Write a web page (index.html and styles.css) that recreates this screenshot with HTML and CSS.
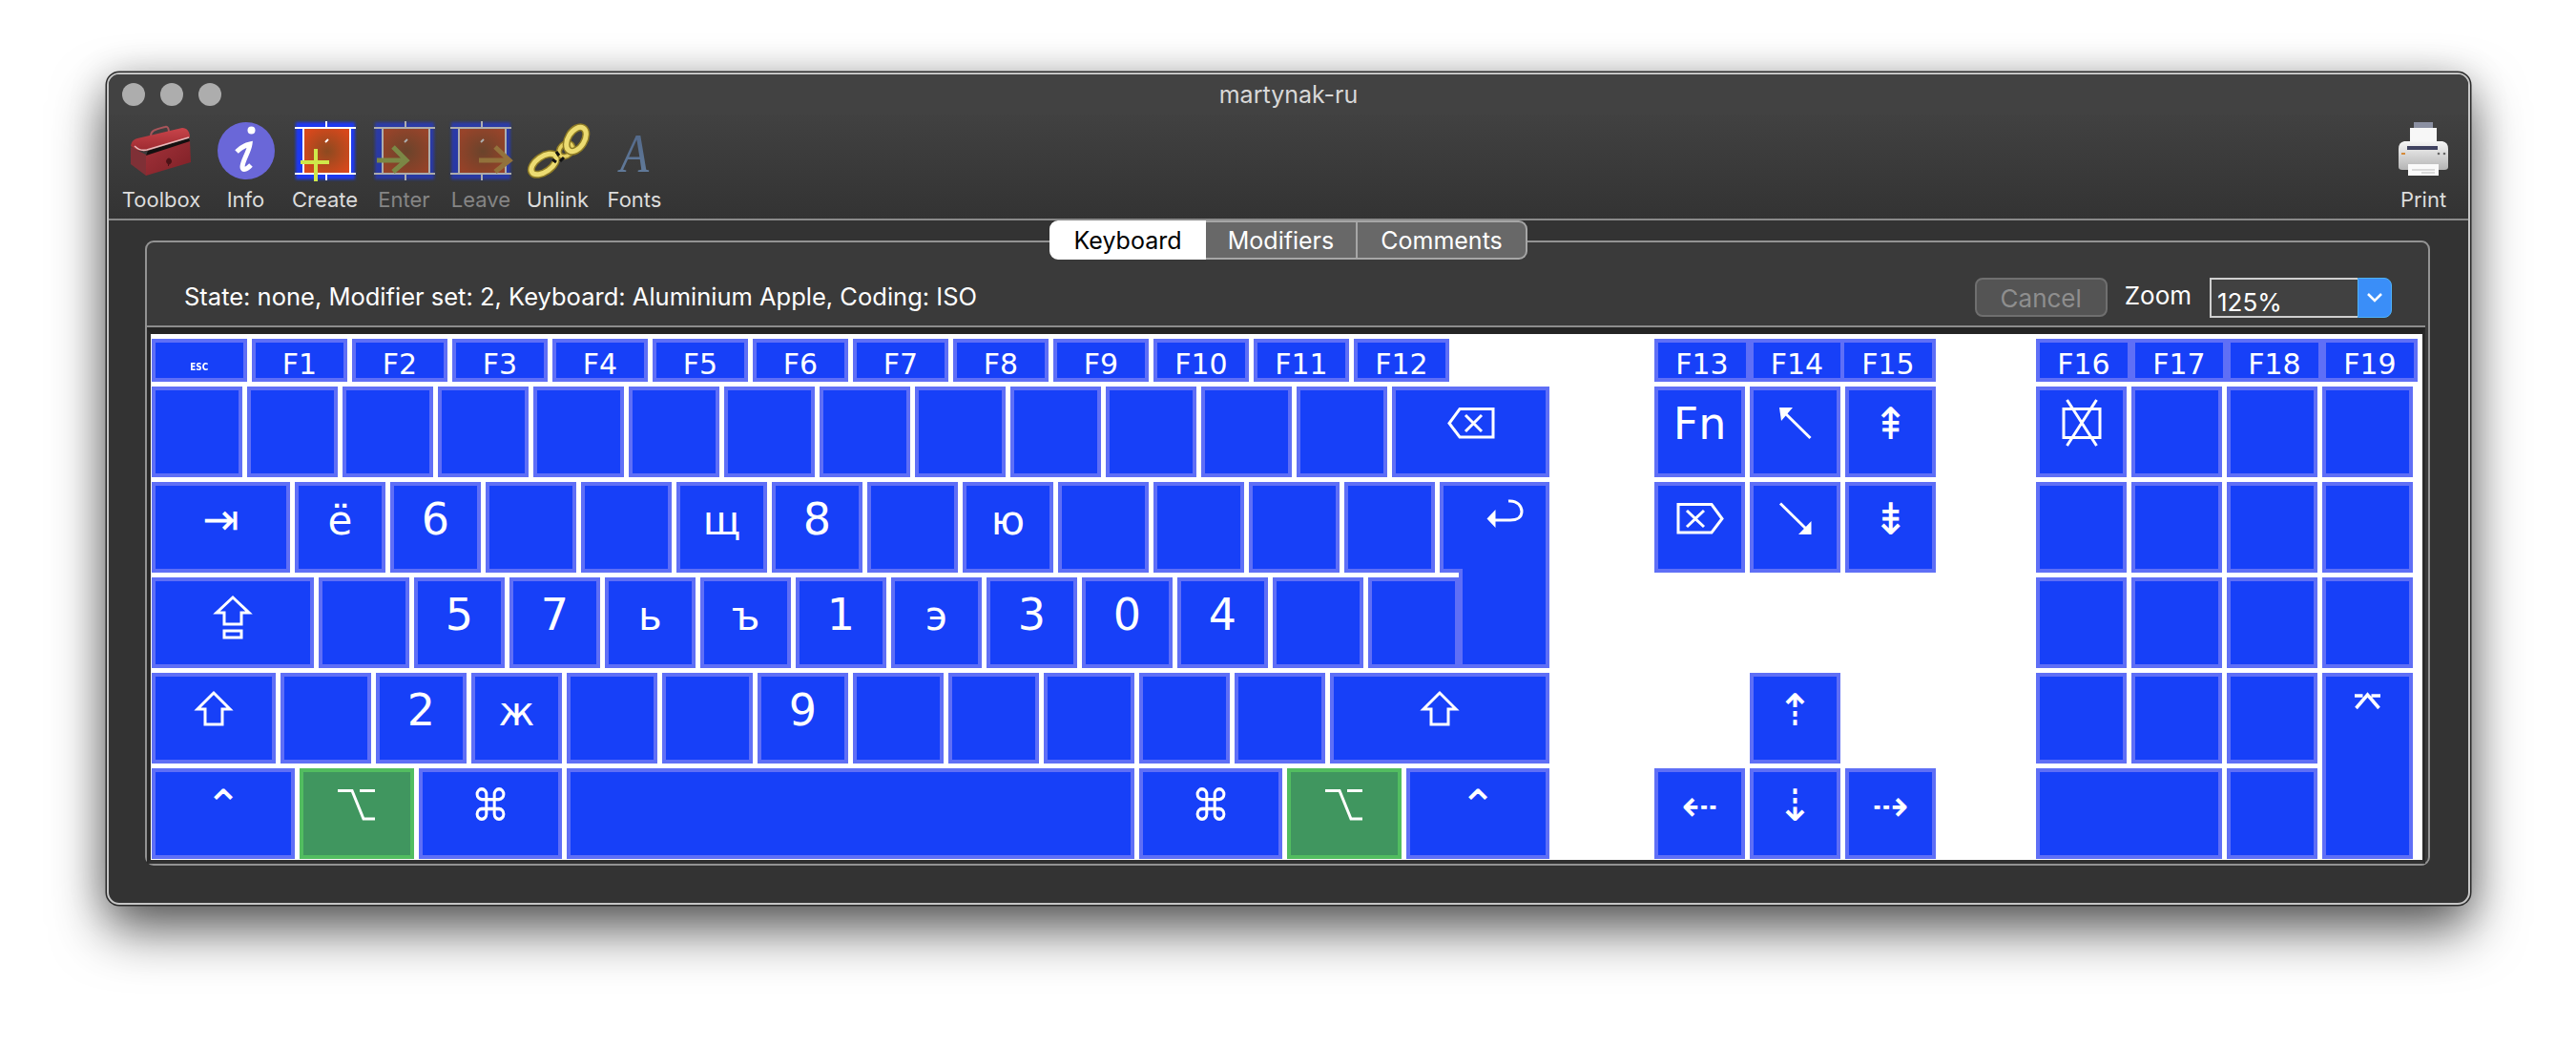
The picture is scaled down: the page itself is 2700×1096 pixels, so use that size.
FILE: index.html
```html
<!DOCTYPE html>
<html lang="en">
<head>
    <meta charset="UTF-8">
    <title>martynak-ru</title>
    <link rel="stylesheet" href="styles.css">
</head>
<body>
    <svg class="defs" width="0" height="0">
        <defs>
            <radialGradient id="cellfill" cx="50%" cy="50%" r="60%">
                <stop offset="0" stop-color="#8c4a20"/>
                <stop offset="1" stop-color="#d8481c"/>
            </radialGradient>
            <linearGradient id="lidfill" x1="0" y1="0" x2="0" y2="1">
                <stop offset="0" stop-color="#c9444a"/>
                <stop offset="1" stop-color="#9c2a30"/>
            </linearGradient>
            <linearGradient id="bodyfill" x1="0" y1="0" x2="1" y2="1">
                <stop offset="0" stop-color="#a3323a"/>
                <stop offset="1" stop-color="#7d2026"/>
            </linearGradient>
            <linearGradient id="printfill" x1="0" y1="0" x2="0" y2="1">
                <stop offset="0" stop-color="#f6f6f6"/>
                <stop offset="1" stop-color="#b4b4b4"/>
            </linearGradient>
            <linearGradient id="afill" x1="0" y1="0" x2="0" y2="1">
                <stop offset="0" stop-color="#4f6485"/>
                <stop offset="1" stop-color="#66809f"/>
            </linearGradient>
            <filter id="soft"><feGaussianBlur stdDeviation="1.4"/></filter>
            <g id="cell">
                <rect x="1" y="2" width="62" height="60" fill="#1c38f2" filter="url(#soft)"/>
                <rect x="10" y="9" width="48" height="47" fill="url(#cellfill)"/>
                <path d="M0 8H64M0 56H64M9 8V56M58 8V56M33 1V8M33 56V63" stroke="#fff" stroke-width="2" fill="none"/>
                <path d="M32 23L35 20" stroke="#fff" stroke-width="2"/>
            </g>
            <path id="k-shift" d="M30 17L13 34H21V50H39V34H47Z" fill="none" stroke="#fff" stroke-width="3"/>
            <path id="k-opt" d="M10 19.500H25L37 49H49M33 19.500H49" fill="none" stroke="#fff" stroke-width="3"/>
        </defs>
    </svg>

    <div class="window">
        <div class="titlebar">
            <div class="lights"><span></span><span></span><span></span></div>
            <div class="title">martynak-ru</div>
        </div>
        <div class="toolbar">
            <div class="tool tool-wide">
                <svg class="ico" viewBox="0 0 64 64">
                    <path d="M21 17C21 11 24 10 36 7C39 6 40 9 40 13" fill="none" stroke="#a8555a" stroke-width="2"/>
                    <path d="M0 28L16 36V58L0 46Z" fill="#7f3036"/>
                    <path d="M16 36L62 21L63 44L16 58Z" fill="url(#bodyfill)"/>
                    <path d="M16 37L62 22L61 19L18 32Z" fill="#141010"/>
                    <path d="M0 27C1 22 3 20 7 19L54 8C59 8 62 12 62 18L17 32C12 33 5 32 0 27Z" fill="url(#lidfill)"/>
                    <path d="M4 27C8 31 13 32 17 31L61 18" fill="none" stroke="#e8b9ba" stroke-width="1.6"/>
                    <path d="M40 40a2.4 3 0 1 0 .1 0M39.5 44v4" fill="#4c1216" stroke="#4c1216"/>
                </svg>
                <span>Toolbox</span>
            </div>
            <div class="tool">
                <svg class="ico" viewBox="0 0 64 64">
                    <circle cx="32" cy="32" r="30" fill="#6a67d8"/>
                    <circle cx="37.500" cy="10.500" r="4" fill="#fff"/>
                    <path d="M22 33C27 28 31 26 36 25C35 33 28 43 28 49C28 53 32 52 37 47" fill="none" stroke="#fff" stroke-width="5"/>
                </svg>
                <span>Info</span>
            </div>
            <div class="tool tool-create">
                <svg class="ico" viewBox="0 0 64 64">
                    <use href="#cell"/>
                    <path d="M6 44H36M22 30V64" stroke="#cfe84a" stroke-width="4"/>
                </svg>
                <span>Create</span>
            </div>
            <div class="tool off">
                <svg class="ico" viewBox="0 0 64 64">
                    <use href="#cell"/>
                    <path d="M3 42H34M20 28L34 42L20 54" fill="none" stroke="#a9c04e" stroke-width="5"/>
                </svg>
                <span>Enter</span>
            </div>
            <div class="tool off">
                <svg class="ico" viewBox="0 0 64 64">
                    <use href="#cell"/>
                    <path d="M30 42H62M47 28L62 42L47 54" fill="none" stroke="#d29a3c" stroke-width="5"/>
                </svg>
                <span>Leave</span>
            </div>
            <div class="tool">
                <svg class="ico" viewBox="0 0 64 64">
                    <g fill="none">
                        <ellipse cx="17" cy="46" rx="15" ry="8" transform="rotate(-35 17 46)" stroke="#8f7c26" stroke-width="8"/>
                        <ellipse cx="17" cy="46" rx="15" ry="8" transform="rotate(-35 17 46)" stroke="#ecdc72" stroke-width="5"/>
                        <ellipse cx="40" cy="31" rx="8" ry="6" transform="rotate(-45 40 31)" stroke="#8f7c26" stroke-width="6.500"/>
                        <ellipse cx="40" cy="31" rx="8" ry="6" transform="rotate(-45 40 31)" stroke="#e6d264" stroke-width="3.500"/>
                        <ellipse cx="51" cy="20" rx="14" ry="8.500" transform="rotate(-58 51 20)" stroke="#8f7c26" stroke-width="8"/>
                        <ellipse cx="51" cy="20" rx="14" ry="8.500" transform="rotate(-58 51 20)" stroke="#ecdc72" stroke-width="5"/>
                        <path d="M30 33L33 37M26 41L30 44M38 39L34 43" stroke="#111" stroke-width="3"/>
                    </g>
                </svg>
                <span>Unlink</span>
            </div>
            <div class="tool">
                <svg class="ico" viewBox="0 0 64 64">
                    <text class="ico-a" transform="translate(32 54) scale(.85 1)">A</text>
                </svg>
                <span>Fonts</span>
            </div>
            <div class="tool tool-print">
                <svg class="ico" viewBox="0 0 64 64">
                    <rect x="22" y="2" width="20" height="7" fill="#8b90a2"/>
                    <rect x="18" y="8" width="28" height="20" fill="#f7f7f7"/>
                    <path d="M6 30Q6 23 12 22H52Q58 23 58 30V49Q58 52 54 52H10Q6 52 6 49Z" fill="url(#printfill)"/>
                    <rect x="15" y="27" width="32" height="4" fill="#3f4260"/>
                    <rect x="9" y="34" width="4" height="2" fill="#d58a3a"/>
                    <circle cx="48" cy="35" r="1.300" fill="#666"/>
                    <circle cx="54" cy="35" r="1.300" fill="#666"/>
                    <rect x="16" y="46" width="32" height="12" fill="#fafafa"/>
                    <path d="M20 52H44M30 55H44" stroke="#bbb"/>
                </svg>
                <span>Print</span>
            </div>
        </div>

        <div class="content">
            <div class="tabs">
                <div class="tab active">Keyboard</div>
                <div class="tab">Modifiers</div>
                <div class="tab last">Comments</div>
            </div>
            <div class="group">
                <div class="status">
                    <div class="state">State: none, Modifier set: 2, Keyboard: Aluminium Apple, Coding: ISO</div>
                    <div class="cancel">Cancel</div>
                    <div class="zoom-label">Zoom</div>
                    <div class="combo">
                        <div class="combo-value">125%</div>
                        <div class="combo-btn">
                            <svg width="18" height="12" viewBox="0 0 18 12"><path d="M2 2L9 9L16 2" fill="none" stroke="#fff" stroke-width="2.500"/></svg>
                        </div>
                    </div>
                </div>
                <div class="scroll">
                    <div class="keys">
                        <div class="block main">
                            <div class="row frow">
                                <div class="k f esc"><span>ESC</span></div>
                                <div class="k f">F1</div>
                                <div class="k f">F2</div>
                                <div class="k f">F3</div>
                                <div class="k f">F4</div>
                                <div class="k f">F5</div>
                                <div class="k f">F6</div>
                                <div class="k f">F7</div>
                                <div class="k f">F8</div>
                                <div class="k f">F9</div>
                                <div class="k f">F10</div>
                                <div class="k f">F11</div>
                                <div class="k f">F12</div>
                            </div>
                            <div class="row">
                                <div class="k"></div><div class="k"></div><div class="k"></div>
                                <div class="k"></div><div class="k"></div><div class="k"></div>
                                <div class="k"></div><div class="k"></div><div class="k"></div>
                                <div class="k"></div><div class="k"></div><div class="k"></div>
                                <div class="k"></div>
                                <div class="k w165 pic">
                                    <svg class="icn" viewBox="0 0 60 60"><path d="M53 19.500H18L7 34.500L18 49H53ZM24 26L41 43M41 26L24 43" fill="none" stroke="#fff" stroke-width="3"/></svg>
                                </div>
                            </div>
                            <div class="row">
                                <div class="k w145 sym">⇥</div>
                                <div class="k ltr">ё</div>
                                <div class="k">6</div>
                                <div class="k"></div>
                                <div class="k"></div>
                                <div class="k ltr">щ</div>
                                <div class="k">8</div>
                                <div class="k"></div>
                                <div class="k ltr">ю</div>
                                <div class="k"></div><div class="k"></div><div class="k"></div>
                                <div class="k"></div>
                                <div class="k w115 pic">
                                    <svg class="icn" viewBox="0 0 60 60"><path d="M44 16C54 15 58 22 58 27C58 33 53 36 46 36H28" fill="none" stroke="#fff" stroke-width="3"/><path d="M21.500 34.500L30.500 25V44Z" fill="#fff"/></svg>
                                </div>
                            </div>
                            <div class="row">
                                <div class="k w170 pic">
                                    <svg class="icn" viewBox="0 0 60 60"><path d="M30 17L13 33H21V45H39V33H47ZM21 52H39V59H21Z" fill="none" stroke="#fff" stroke-width="3"/></svg>
                                </div>
                                <div class="k"></div>
                                <div class="k">5</div>
                                <div class="k">7</div>
                                <div class="k ltr">ь</div>
                                <div class="k ltr">ъ</div>
                                <div class="k">1</div>
                                <div class="k ltr">э</div>
                                <div class="k">3</div>
                                <div class="k">0</div>
                                <div class="k">4</div>
                                <div class="k"></div>
                                <div class="k"></div>
                                <div class="ret-tail"></div>
                            </div>
                            <div class="row">
                                <div class="k w130 pic"><svg class="icn" viewBox="0 0 60 60"><use href="#k-shift"/></svg></div>
                                <div class="k"></div>
                                <div class="k">2</div>
                                <div class="k ltr">ж</div>
                                <div class="k"></div>
                                <div class="k"></div>
                                <div class="k">9</div>
                                <div class="k"></div><div class="k"></div><div class="k"></div>
                                <div class="k"></div><div class="k"></div>
                                <div class="k w230 pic"><svg class="icn" viewBox="0 0 60 60"><use href="#k-shift"/></svg></div>
                            </div>
                            <div class="row">
                                <div class="k w150 sym">⌃</div>
                                <div class="k w120 pic down"><svg class="icn" viewBox="0 0 60 60"><use href="#k-opt"/></svg></div>
                                <div class="k w150 sym"><span class="cmd">⌘</span></div>
                                <div class="k wspace"></div>
                                <div class="k w150 sym"><span class="cmd">⌘</span></div>
                                <div class="k w120 pic down"><svg class="icn" viewBox="0 0 60 60"><use href="#k-opt"/></svg></div>
                                <div class="k w150 sym">⌃</div>
                            </div>
                        </div>

                        <div class="block nav">
                            <div class="row frow tight">
                                <div class="k f">F13</div>
                                <div class="k f f14">F14</div>
                                <div class="k f">F15</div>
                            </div>
                            <div class="row">
                                <div class="k">Fn</div>
                                <div class="k pic">
                                    <svg class="icn" viewBox="0 0 60 60"><path d="M16 21L45.500 50" fill="none" stroke="#fff" stroke-width="3"/><path d="M13 18H27L15 32Z" fill="#fff"/></svg>
                                </div>
                                <div class="k sym">⇞</div>
                            </div>
                            <div class="row">
                                <div class="k pic">
                                    <svg class="icn" viewBox="0 0 60 60"><path d="M7 19.500H42L53 34.500L42 49H7ZM16 26L34 43M34 26L16 43" fill="none" stroke="#fff" stroke-width="3"/></svg>
                                </div>
                                <div class="k pic">
                                    <svg class="icn" viewBox="0 0 60 60"><path d="M14 18.500L44 48" fill="none" stroke="#fff" stroke-width="3"/><path d="M46.500 51H33L46.500 37Z" fill="#fff"/></svg>
                                </div>
                                <div class="k sym">⇟</div>
                            </div>
                            <div class="row"></div>
                            <div class="row">
                                <div class="k sym nav-up">⇡</div>
                            </div>
                            <div class="row">
                                <div class="k sym">⇠</div>
                                <div class="k sym">⇣</div>
                                <div class="k sym">⇢</div>
                            </div>
                        </div>

                        <div class="block pad">
                            <div class="row frow tight">
                                <div class="k f">F16</div>
                                <div class="k f">F17</div>
                                <div class="k f">F18</div>
                                <div class="k f">F19</div>
                            </div>
                            <div class="padgrid">
                                <div class="k pic">
                                    <svg class="icn" viewBox="0 0 60 60"><path d="M11 19.500H49V49.500H11ZM14.500 10L45.500 58M45.500 10L14.500 58" fill="none" stroke="#fff" stroke-width="3"/></svg>
                                </div>
                                <div class="k"></div><div class="k"></div><div class="k"></div>
                                <div class="k"></div><div class="k"></div><div class="k"></div><div class="k"></div>
                                <div class="k"></div><div class="k"></div><div class="k"></div><div class="k"></div>
                                <div class="k"></div><div class="k"></div><div class="k"></div>
                                <div class="k pic pad-enter">
                                    <svg class="icn" viewBox="0 0 60 60"><path d="M16 20H24.500M33.500 20H43M17.500 33L29.500 19L41.500 33" fill="none" stroke="#fff" stroke-width="3.500"/></svg>
                                </div>
                                <div class="k pad-zero"></div><div class="k"></div>
                            </div>
                        </div>
                    </div>
                </div>
            </div>
        </div>
    </div>
</body>
</html>
```

FILE: styles.css
```css
html, body{
    margin: 0;
    padding: 0;
    height: 100%;
    background: #fff;
    overflow: hidden;
}
body{
    padding: 76px 0 0 112px;
    box-sizing: border-box;
    font-family: Inter, "Liberation Sans", sans-serif;
}
.defs{
    position: absolute;
}
.window{
    width: 2477px;
    height: 872px;
    box-sizing: border-box;
    border: 2px solid #c6c6c6;
    border-radius: 13px;
    background: #333;
    box-shadow: 0 0 0 1.500px #2a2a2a, 0 26px 56px rgba(0,0,0,.62), 0 4px 40px rgba(0,0,0,.2);
    overflow: hidden;
}

/* title and toolbar */
.titlebar{
    display: grid;
    grid-template-columns: 1fr auto 1fr;
    align-items: center;
    height: 42px;
    background: #424242;
}
.lights{
    display: flex;
    gap: 16px;
    padding-left: 14px;
}
.lights span{
    width: 24px;
    height: 24px;
    border-radius: 50%;
    background: #adadad;
}
.title{
    font-size: 25px;
    color: #d8d8d8;
}
.toolbar{
    display: flex;
    gap: 16.500px;
    height: 111px;
    box-sizing: border-box;
    padding: 6px 15px 0;
    background: linear-gradient(#414141, #333);
    border-bottom: 2px solid #8a8a8a;
}
.tool{
    display: flex;
    flex-direction: column;
    align-items: center;
    width: 64px;
    font-size: 22px;
    color: #dcdcdc;
    line-height: 38px;
}
.tool span{
    white-space: nowrap;
}
.tool-wide{
    width: 80px;
}
.tool-create{
    width: 69px;
}
.tool-print{
    margin-left: auto;
}
.ico{
    display: block;
    width: 64px;
    height: 64px;
    flex: none;
    overflow: visible;
}
.off{
    color: #858585;
}
.off .ico{
    opacity: .58;
}
.ico-a{
    font-family: "Liberation Serif", serif;
    font-style: italic;
    font-size: 58px;
    fill: url(#afill);
    text-anchor: middle;
}

/* tabs and group box */
.content{
    position: relative;
    height: 714px;
    padding: 21px 40px 0 38px;
    box-sizing: border-box;
}
.tabs{
    position: absolute;
    top: 0;
    left: 986px;
    display: flex;
    height: 41px;
    font-size: 25px;
    line-height: 39px;
}
.tab{
    width: 159px;
    box-sizing: border-box;
    text-align: center;
    color: #fff;
    background: #686868;
    border: 2px solid #a6a6a6;
    border-left: 0;
}
.tab.active{
    width: 164px;
    color: #000;
    background: #fff;
    border: 2px solid #fff;
    border-radius: 9px 0 0 9px;
}
.tab.last{
    width: 178px;
    border-radius: 0 9px 9px 0;
}
.group{
    height: 655px;
    box-sizing: border-box;
    border: 2px solid #939393;
    border-radius: 9px;
    background: #3a3a3a;
    display: flex;
    flex-direction: column;
}
.status{
    display: flex;
    align-items: center;
    height: 87px;
    box-sizing: border-box;
    padding: 24px 38px 0 39px;
    font-size: 26px;
    color: #fff;
}
.state{
    flex: 1;
    font-size: 25.500px;
    padding-top: 1px;
}
.cancel{
    width: 139px;
    height: 41px;
    margin-top: 4px;
    box-sizing: border-box;
    border: 2px solid #6f6f6f;
    border-radius: 8px;
    background: #545454;
    color: #8e8e8e;
    text-align: center;
    line-height: 39px;
}
.zoom-label{
    margin-left: 18px;
}
.combo{
    display: flex;
    width: 191px;
    height: 42px;
    margin: 4px 0 0 19px;
    box-sizing: border-box;
}
.combo-value{
    flex: 1;
    box-sizing: border-box;
    padding: 7px 0 0 6px;
    line-height: 34px;
    background: #414141;
    border: 2px solid #cfcfcf;
    border-right: 0;
}
.combo-btn{
    display: flex;
    align-items: center;
    justify-content: center;
    width: 36px;
    background: #3a8ef8;
    border: 1px solid #4fb2f8;
    border-radius: 0 8px 8px 0;
    box-sizing: border-box;
}
.scroll{
    height: 564px;
    box-sizing: border-box;
    margin-right: 3px;
    border-top: 2px solid #8c8c8c;
}
.keys{
    display: flex;
    height: 562px;
    box-sizing: border-box;
    border-style: solid;
    border-color: #242424 #2a2a2a #303030;
    border-width: 7px 3px 4px 4px;
    padding: 5px 0 0 1px;
    background: #fff;
    font-family: "DejaVu Sans", sans-serif;
    color: #fff;
}

/* keyboard */
.block{
    display: flex;
    flex-direction: column;
    gap: 5px;
}
.main{
    width: 1465px;
}
.nav{
    width: 295px;
    margin-left: 110px;
}
.pad{
    width: 400px;
    margin-left: 105px;
}
.row{
    display: flex;
    gap: 5px;
    height: 95px;
}
.frow{
    height: 45px;
}
.tight{
    gap: 0;
}
.k{
    flex: none;
    width: 95px;
    box-sizing: border-box;
    border: 4px solid #5f6ff6;
    background: #1740f8;
    padding-top: 5px;
    text-align: center;
    font-size: 46px;
    line-height: 60px;
}
.f{
    width: 100px;
    padding-top: 4.500px;
    font-size: 30px;
    line-height: 36px;
}
.f14{
    width: 95px;
    border-right: 0;
}
.esc{
    padding-top: 8px;
    font-size: 11px;
    font-weight: bold;
    line-height: 36px;
}
.esc span{
    display: inline-block;
    transform: scaleX(.8);
}
.ltr{
    padding-top: 6.500px;
    font-size: 42px;
}
.sym{
    padding-top: 5px;
    font-size: 46px;
}
.pic{
    padding-top: 0;
}
.icn{
    display: block;
    width: 60px;
    height: 60px;
    margin: 0 auto;
    overflow: visible;
}
.cmd{
    display: inline-block;
    transform: scaleX(.88);
}
.w115{ width: 115px; }
.w120{ width: 120px; }
.w130{ width: 130px; }
.w145{ width: 145px; }
.w150{ width: 150px; }
.w165{ width: 165px; }
.w170{ width: 170px; }
.w230{ width: 230px; }
.wspace{ width: 595px; }
.down{
    background: #40965f;
    border-color: #52bd60;
}
.ret-tail{
    flex: none;
    width: 95px;
    height: 104px;
    margin: -9px 0 0 -5px;
    box-sizing: border-box;
    border: 4px solid #5f6ff6;
    border-top: 0;
    background: #1740f8;
}
.nav-up{
    margin-left: 100px;
}
.padgrid{
    display: grid;
    grid-template-columns: repeat(4, 95px);
    grid-auto-rows: 95px;
    gap: 5px;
}
.pad-enter{
    grid-column: 4;
    grid-row: 4 / span 2;
}
.pad-zero{
    grid-column: 1 / span 2;
    width: 195px;
}
```
